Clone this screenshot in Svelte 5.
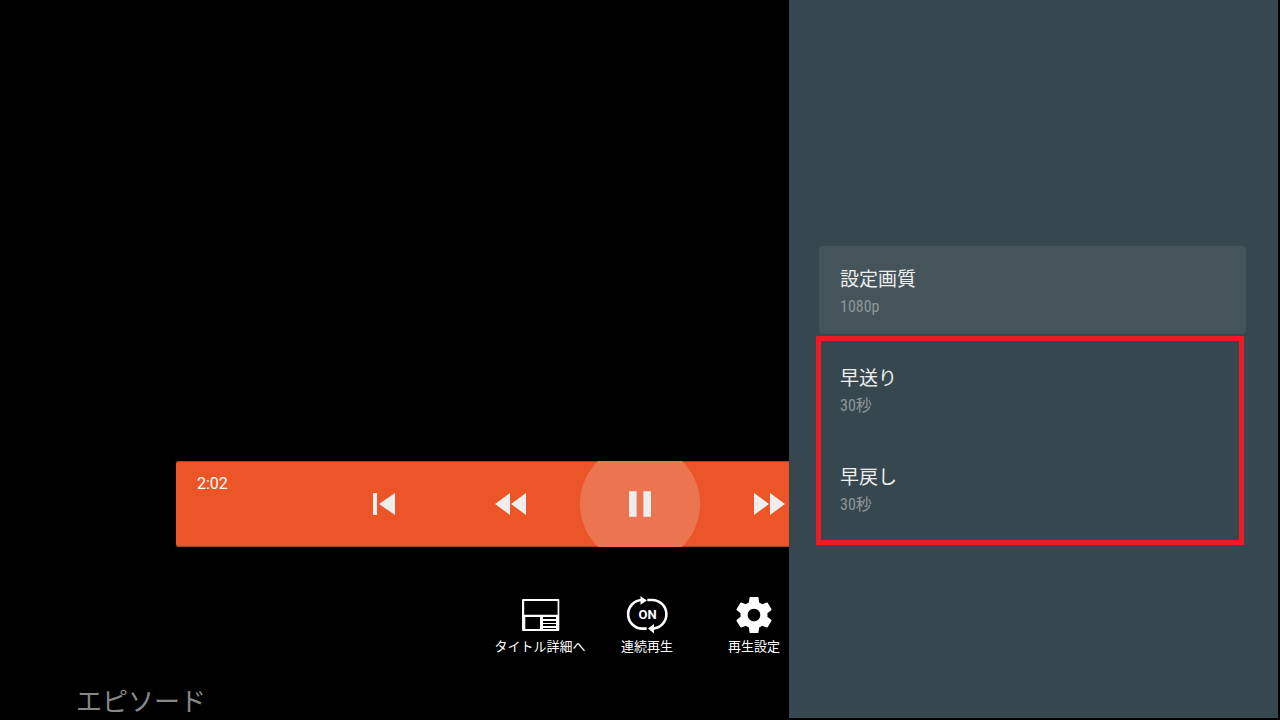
<script>
  const settings = [
    { title: '早送り', value: '30秒' },
    { title: '早戻し', value: '30秒' }
  ];
</script>

<main class="screen">
  <section class="player">
    <div class="bar">
      <time class="elapsed">2:02</time>
      <div class="controls">
        <button class="control" aria-label="前へ">
          <svg width="32" height="32" viewBox="0 0 32 32"><path d="M7 5h4v22H7zM29 5v22L13 16z" /></svg>
        </button>
        <button class="control" aria-label="早戻し">
          <svg width="32" height="32" viewBox="0 0 32 32"><path d="M15 5v22L0 16zM31 5v22L16 16z" /></svg>
        </button>
        <button class="control active" aria-label="一時停止">
          <svg width="32" height="32" viewBox="0 0 32 32"><path d="M5 3.2h7.6v25.6H5zM19.4 3.2H27v25.6h-7.6z" /></svg>
        </button>
        <button class="control" aria-label="早送り">
          <svg width="32" height="32" viewBox="0 0 32 32"><path d="M1 5v22l15-11zM17 5v22l15-11z" /></svg>
        </button>
        <button class="control" aria-label="次へ">
          <svg width="32" height="32" viewBox="0 0 32 32"><path d="M21 5h4v22h-4zM3 5v22l16-11z" /></svg>
        </button>
      </div>
    </div>

    <nav class="actions">
      <button class="action">
        <svg width="42" height="40" viewBox="0 0 42 40">
          <rect x="3" y="3" width="37.300" height="32" rx="1" fill="#fff" />
          <path d="M5.200 5h33.400v13.700H5.200zM6.300 21h14.700v12H6.300zM24 21h13v2H24zM24 25h13v2H24zM24 28h13v2H24zM24 32h13v1H24z" fill="#000" />
        </svg>
        <span>タイトル詳細へ</span>
      </button>
      <button class="action">
        <svg width="42" height="40" viewBox="0 0 42 40">
          <g fill="none" stroke="#fff" stroke-width="2.600">
            <path d="M21.300 4H26.100A14.300 14.300 0 0 1 26.100 32.600H25" />
            <path d="M16 4A14.300 14.300 0 0 0 16.900 32.600H20.700" />
          </g>
          <path d="M14.500 0l6.300 4.400-6.300 4.400zM28 28v9.400l-6-4.800z" fill="#fff" />
          <text x="21.500" y="23" text-anchor="middle">ON</text>
        </svg>
        <span>連続再生</span>
      </button>
      <button class="action">
        <svg width="42" height="40" viewBox="0 0 42 40">
          <path transform="translate(-.6 -2.600) scale(1.800)" fill="#fff" d="M19.430 12.980c.04-.32.07-.64.07-.98s-.03-.66-.07-.98l2.110-1.650c.19-.15.24-.42.12-.64l-2-3.460c-.12-.22-.39-.3-.61-.22l-2.490 1c-.52-.4-1.080-.73-1.690-.98l-.38-2.650C14.460 2.180 14.250 2 14 2h-4c-.25 0-.46.18-.49.42l-.38 2.650c-.61.25-1.170.59-1.690.98l-2.490-1c-.23-.09-.49 0-.61.22l-2 3.460c-.13.22-.07.49.12.64l2.110 1.650c-.04.32-.07.65-.07.98s.03.66.07.98l-2.110 1.650c-.19.15-.24.42-.12.64l2 3.460c.12.22.39.3.61.22l2.490-1c.52.4 1.080.73 1.690.98l.38 2.650c.03.24.24.42.49.42h4c.25 0 .46-.18.49-.42l.38-2.650c.61-.25 1.170-.59 1.690-.98l2.490 1c.23.09.49 0 .61-.22l2-3.460c.12-.22.07-.49-.12-.64l-2.110-1.650zM12 15.500c-1.930 0-3.500-1.570-3.500-3.500s1.570-3.500 3.500-3.500 3.500 1.570 3.500 3.500-1.570 3.500-3.500 3.500z" />
        </svg>
        <span>再生設定</span>
      </button>
    </nav>

    <h2 class="episodes">エピソード</h2>
  </section>

  <aside class="drawer">
    <button class="item selected">
      <span class="title">設定画質</span>
      <span class="value">1080p</span>
    </button>
    <div class="group">
      {#each settings as s}
        <button class="item">
          <span class="title">{s.title}</span>
          <span class="value">{s.value}</span>
        </button>
      {/each}
    </div>
  </aside>
</main>

<style>
  :global(body) {
    background: #000;
  }
  .screen {
    position: relative;
    height: 100vh;
    overflow: hidden;
    background: #000;
    color: #fff;
    font-family: Roboto, 'Noto Sans CJK JP', sans-serif;
  }
  button {
    margin: 0;
    padding: 0;
    border: 0;
    background: none;
    color: inherit;
    font: inherit;
  }
  svg {
    display: block;
  }
  .player {
    display: flex;
    flex-direction: column;
    justify-content: flex-end;
    height: 100%;
  }
  .bar {
    display: grid;
    grid-template-rows: 86px;
    margin: 0 176px;
    overflow: hidden;
    border-radius: 3px;
    background: #eb5528;
    box-shadow: inset 0 1px #ad401f, inset 0 -1px #ad401f;
  }
  .elapsed {
    grid-area: 1 / 1;
    padding: 13px 21px;
    font-size: 16px;
    line-height: 20px;
  }
  .controls {
    grid-area: 1 / 1;
    display: flex;
    justify-content: center;
    align-items: center;
    gap: 9px;
    min-height: 0;
  }
  .control {
    display: flex;
    flex: none;
    justify-content: center;
    align-items: center;
    width: 120px;
    height: 120px;
    border-radius: 50%;
    fill: #eee;
  }
  .active {
    background: #ea7550;
  }
  .actions {
    display: flex;
    gap: 1px;
    margin: 49px 0 0 487px;
  }
  .action {
    display: flex;
    flex-direction: column;
    align-items: center;
    gap: 1px;
    width: 106px;
    font-size: 13px;
    line-height: 20px;
    white-space: nowrap;
  }
  .action text {
    fill: #fff;
    font: 700 13px Roboto, sans-serif;
  }
  .episodes {
    margin: 27px 76px 0;
    font-size: 26px;
    font-weight: 400;
    line-height: 36px;
    color: #888;
  }
  .drawer {
    position: absolute;
    inset: 0 2px 2px auto;
    display: flex;
    flex-direction: column;
    gap: 11px;
    box-sizing: border-box;
    width: 489px;
    padding: 246px 32px 0 30px;
    background: #37474f;
  }
  .group {
    position: relative;
    display: flex;
    flex-direction: column;
    gap: 11px;
  }
  .group::after {
    content: '';
    position: absolute;
    inset: -9px 2px -13px -3px;
    border: 5px solid #ed1c24;
    pointer-events: none;
  }
  .item {
    display: flex;
    flex-direction: column;
    gap: 5px;
    box-sizing: border-box;
    height: 88px;
    padding: 22px 21px 17px;
    border-radius: 4px;
    text-align: left;
  }
  .selected {
    background: #45545b;
  }
  .title {
    font-size: 19px;
    line-height: 24px;
    color: #eee;
  }
  .value {
    font-family: 'Roboto Condensed', 'Liberation Sans Narrow', 'Noto Sans CJK JP', sans-serif;
    font-size: 16px;
    line-height: 20px;
    color: #8e979c;
  }
</style>
